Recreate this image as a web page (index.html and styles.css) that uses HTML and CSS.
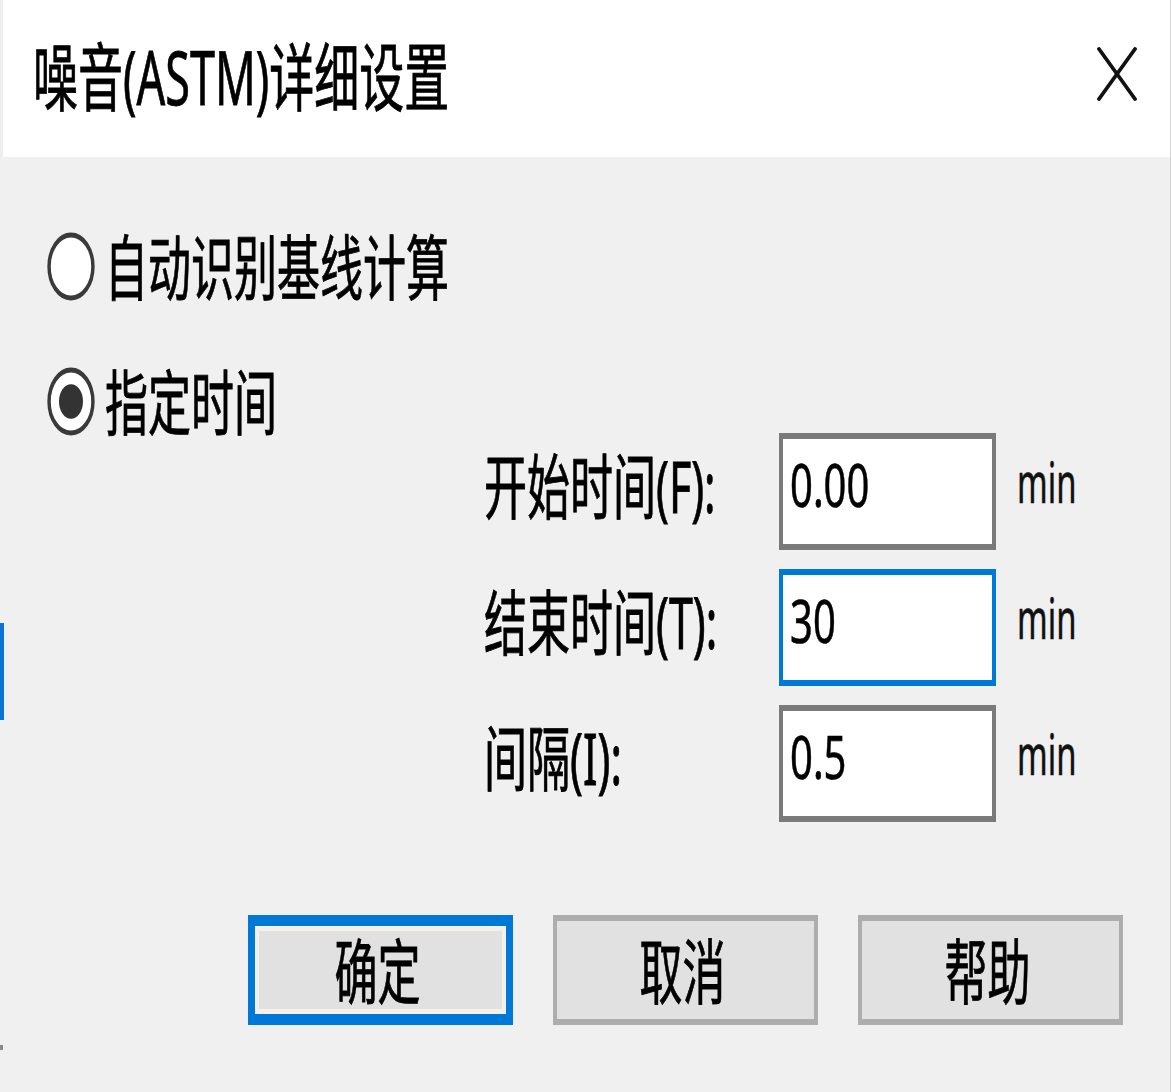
FILE: index.html
```html
<!DOCTYPE html>
<html lang="zh-CN">
<head>
<meta charset="utf-8">
<title>噪音(ASTM)详细设置</title>
<link rel="stylesheet" href="styles.css">
</head>
<body>
<div class="dialog">
  <div class="titlebar">
    <span class="t title">噪音(ASTM)详细设置</span>
    <svg class="close" viewBox="0 0 40 54" width="40" height="54"><line x1="2" y1="2" x2="38" y2="52"/><line x1="38" y1="2" x2="2" y2="52"/></svg>
  </div>
  <div class="content">
    <div class="radio-row">
      <svg class="radio" viewBox="0 0 14 14" preserveAspectRatio="none"><circle cx="7" cy="7" r="6.4" class="ring"/></svg>
      <span class="t">自动识别基线计算</span>
    </div>
    <div class="radio-row">
      <svg class="radio" viewBox="0 0 14 14" preserveAspectRatio="none"><circle cx="7" cy="7" r="6.4" class="ring"/><circle cx="7" cy="7" r="3.5" class="dot"/></svg>
      <span class="t">指定时间</span>
    </div>
    <div class="fields">
      <div class="flabel"><span class="t">开始时间(F):</span></div>
      <div class="field"><span class="v">0.00</span></div>
      <div class="unit"><span class="u">min</span></div>
      <div class="flabel"><span class="t">结束时间(T):</span></div>
      <div class="field focus"><span class="v">30</span></div>
      <div class="unit"><span class="u">min</span></div>
      <div class="flabel"><span class="t">间隔(I):</span></div>
      <div class="field"><span class="v">0.5</span></div>
      <div class="unit"><span class="u">min</span></div>
    </div>
    <div class="buttons">
      <div class="btn default"><span class="t">确定</span></div>
      <div class="btn"><span class="t">取消</span></div>
      <div class="btn"><span class="t">帮助</span></div>
    </div>
  </div>
  <div class="edge-mark"></div>
  <div class="edge-dot"></div>
</div>
</body>
</html>
```
FILE: styles.css
```css
html, body {
  margin: 0;
  padding: 0;
}
body {
  width: 1171px;
  height: 1092px;
  overflow: hidden;
  background: #f0f0f0;
  font-family: "Noto Sans", "Noto Sans CJK SC", sans-serif;
  color: #000;
}
.dialog {
  position: relative;
  height: 1092px;
  box-sizing: border-box;
  border-right: 1px solid #d4d4d4;
}
.titlebar {
  height: 157px;
  box-sizing: border-box;
  background: #fff;
  box-shadow: inset 3px 0 0 #eeeeee;
  display: flex;
  align-items: center;
  justify-content: space-between;
  padding: 0 33px 4px 33px;
}
.t {
  display: inline-block;
  font-size: 43px;
  line-height: 1;
  white-space: nowrap;
  transform: scaleY(1.65);
  -webkit-text-stroke: 0.5px #000;
}
.title {
  font-size: 45px;
}
.close {
  margin-bottom: 5px;
  stroke: #111;
  stroke-width: 3.8;
  stroke-linecap: round;
}
.content {
  padding: 75px 0 0 47px;
}
.radio-row {
  display: flex;
  align-items: center;
  gap: 10px;
  height: 69px;
}
.radio-row + .radio-row {
  margin-top: 66px;
}
.radio {
  width: 48px;
  height: 69px;
  flex: none;
}
.ring {
  fill: #fff;
  stroke: #3a3a3a;
  stroke-width: 1;
}
.dot {
  fill: #333;
}
.fields {
  display: grid;
  grid-template-columns: 295px 217px auto;
  grid-auto-rows: 117px;
  row-gap: 19px;
  margin: -3px 0 0 437px;
}
.flabel {
  display: flex;
  align-items: center;
  padding-bottom: 12px;
}
.field {
  box-sizing: border-box;
  background: #fff;
  border: solid #7a7a7a;
  border-width: 6px 4px;
  display: flex;
  align-items: center;
  padding: 0 0 16px 7px;
}
.field.focus {
  border-color: #0078d7;
}
.v {
  display: inline-block;
  font-size: 40px;
  line-height: 1;
  transform: scaleY(1.5);
  -webkit-text-stroke: 0.4px #000;
}
.unit {
  display: flex;
  align-items: center;
  padding: 0 0 20px 21px;
}
.u {
  display: inline-block;
  font-size: 40px;
  line-height: 1;
  color: #111;
  transform: scale(0.82, 1.4);
  transform-origin: left center;
  -webkit-text-stroke: 0.4px #111;
}
.buttons {
  display: flex;
  gap: 40px;
  margin: 93px 0 0 201px;
}
.btn {
  width: 265px;
  height: 110px;
  box-sizing: border-box;
  background: #e1e1e1;
  border: solid #adadad;
  border-width: 6px 4px;
  display: flex;
  align-items: center;
  justify-content: center;
  padding-right: 6px;
}
.btn.default {
  border-color: #0078d7;
  border-width: 11px 7px;
  box-shadow: inset 0 5px 0 #f6f0ea, inset 0 -5px 0 #f6f0ea, inset 4px 0 0 #f6f0ea, inset -4px 0 0 #f6f0ea;
}
.edge-mark {
  position: absolute;
  left: 0;
  top: 623px;
  width: 4px;
  height: 97px;
  background: #0a74d2;
}
.edge-dot {
  position: absolute;
  left: 0;
  top: 1045px;
  width: 3px;
  height: 5px;
  background: #8a8a8a;
}
```
